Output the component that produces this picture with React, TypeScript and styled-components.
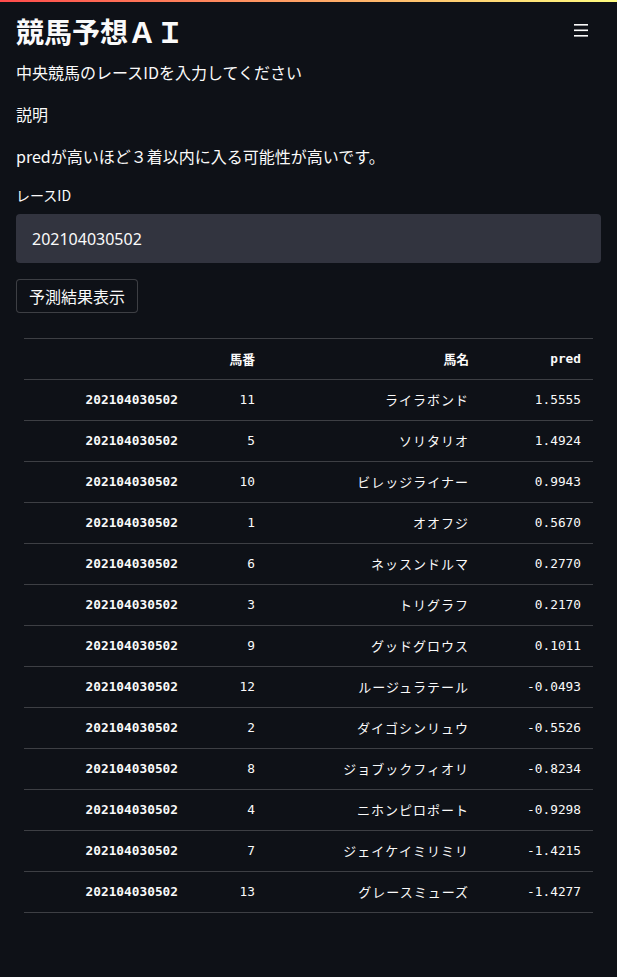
import styled, { createGlobalStyle } from 'styled-components';

const GlobalStyle = createGlobalStyle`
  html, body {
    margin: 0;
    padding: 0;
    background: #0e1117;
  }
  body {
    color: #fafafa;
    font-family: "Noto Sans CJK JP", "Noto Sans", sans-serif;
  }
`;

const Decoration = styled.div`
  height: 2px;
  background: linear-gradient(90deg, #ff4b4b, #fffd80);
`;

const Page = styled.div`
  min-height: 975px;
  background: #0e1117;
`;

const Header = styled.div`
  display: flex;
  justify-content: space-between;
  align-items: flex-start;
  padding: 12px 16px 0 16px;
`;

const Title = styled.h1`
  margin: 0;
  font-size: 28px;
  line-height: 34px;
  font-weight: 700;
  letter-spacing: 0;
`;

const MenuButton = styled.div`
  width: 14px;
  height: 14px;
  margin: 9px 13px 0 0;
  display: flex;
  align-items: center;
  justify-content: center;
`;

const Main = styled.div`
  padding: 0 16px;
`;

const Text = styled.p<{ $top: number }>`
  margin: ${(p) => p.$top}px 0 0 0;
  font-size: 16px;
  line-height: 24px;
`;

const Label = styled.label`
  display: block;
  margin-top: 17px;
  font-size: 14px;
  line-height: 20px;
`;

const Input = styled.div`
  margin-top: 9px;
  height: 49px;
  box-sizing: border-box;
  padding: 0 16px;
  display: flex;
  align-items: center;
  background: #32343f;
  border-radius: 4px;
  font-family: "Noto Sans", sans-serif;
  font-size: 16px;
`;

const Button = styled.button`
  display: block;
  margin-top: 16px;
  height: 34px;
  padding: 0 12px;
  background: #0e1117;
  color: #fafafa;
  border: 1px solid rgba(250, 250, 250, 0.2);
  border-radius: 4px;
  font-family: "Noto Sans CJK JP", sans-serif;
  font-size: 16px;
  line-height: 20px;
`;

const Table = styled.table`
  margin: 25px 8px 0 8px;
  border-collapse: collapse;
  table-layout: fixed;
  width: 569px;
  font-family: "DejaVu Sans Mono", "Noto Sans CJK JP", monospace;
  font-size: 12.8px;
`;

const Row = styled.tr`
  height: 41px;
  border-top: 1px solid rgba(250, 250, 250, 0.2);
  border-bottom: 1px solid rgba(250, 250, 250, 0.2);
`;

const Th = styled.th`
  padding: 0 12px 1px 0;
  text-align: right;
  font-weight: 700;
`;

const Td = styled.td<{ $bold?: boolean; $kana?: boolean }>`
  padding: 0 12px 1px 0;
  text-align: right;
  font-weight: ${(p) => (p.$bold ? 700 : 400)};
  font-family: ${(p) =>
    p.$kana ? '"Noto Sans CJK JP", sans-serif' : 'inherit'};
  font-size: ${(p) => (p.$kana ? '13px' : '12.8px')};
  letter-spacing: ${(p) => (p.$kana ? '1px' : '0')};
  white-space: nowrap;
`;

const rows: [number, string, string][] = [
  [11, 'ライラボンド', '1.5555'],
  [5, 'ソリタリオ', '1.4924'],
  [10, 'ビレッジライナー', '0.9943'],
  [1, 'オオフジ', '0.5670'],
  [6, 'ネッスンドルマ', '0.2770'],
  [3, 'トリグラフ', '0.2170'],
  [9, 'グッドグロウス', '0.1011'],
  [12, 'ルージュラテール', '-0.0493'],
  [2, 'ダイゴシンリュウ', '-0.5526'],
  [8, 'ジョブックフィオリ', '-0.8234'],
  [4, 'ニホンピロポート', '-0.9298'],
  [7, 'ジェイケイミリミリ', '-1.4215'],
  [13, 'グレースミューズ', '-1.4277'],
];

const App = () => {
  return (
    <Page>
      <GlobalStyle />
      <Decoration />
      <Header>
        <Title>競馬予想ＡＩ</Title>
        <MenuButton>
          <svg width="14" height="13" viewBox="0 0 14 13">
            <rect x="0" y="0" width="14" height="1.6" fill="#fafafa" />
            <rect x="0" y="5.5" width="14" height="1.6" fill="#fafafa" />
            <rect x="0" y="11" width="14" height="1.6" fill="#fafafa" />
          </svg>
        </MenuButton>
      </Header>
      <Main>
        <Text $top={12}>中央競馬のレースIDを入力してください</Text>
        <Text $top={18}>説明</Text>
        <Text $top={18}>predが高いほど３着以内に入る可能性が高いです。</Text>
        <Label>レースID</Label>
        <Input>202104030502</Input>
        <Button>予測結果表示</Button>
        <Table>
          <colgroup>
            <col style={{ width: 166 }} />
            <col style={{ width: 77 }} />
            <col style={{ width: 214 }} />
            <col style={{ width: 112 }} />
          </colgroup>
          <thead>
            <Row>
              <Th></Th>
              <Th>馬番</Th>
              <Th>馬名</Th>
              <Th>pred</Th>
            </Row>
          </thead>
          <tbody>
            {rows.map(([num, name, pred]) => (
              <Row key={num}>
                <Td $bold>202104030502</Td>
                <Td>{num}</Td>
                <Td $kana>{name}</Td>
                <Td>{pred}</Td>
              </Row>
            ))}
          </tbody>
        </Table>
      </Main>
    </Page>
  );
};

export default App;
